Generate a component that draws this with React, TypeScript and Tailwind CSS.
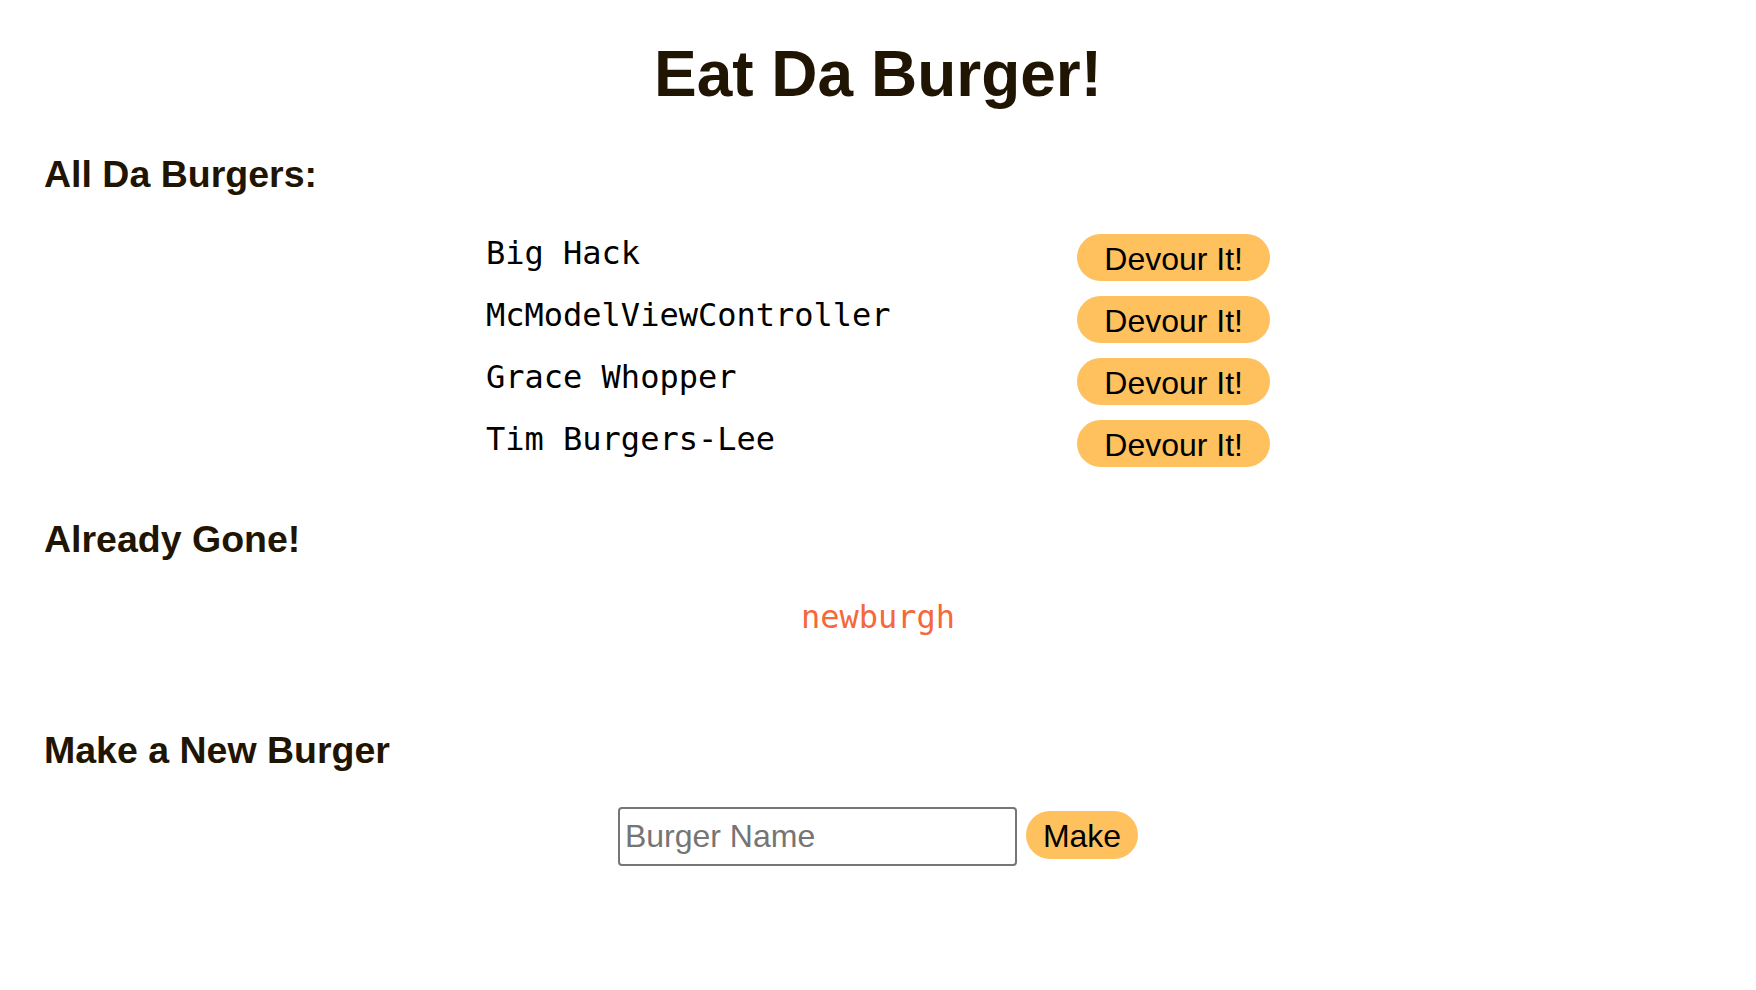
const burgers = ["Big Hack", "McModelViewController", "Grace Whopper", "Tim Burgers-Lee"];
const devoured = ["newburgh"];

export default function App() {
  return (
    <div className="min-h-screen bg-white px-[44px] pb-16 font-['Liberation_Sans',Arial,sans-serif] text-[#1f1502]">
      <h1 className="pt-[38px] text-center text-[64px] leading-[72px] font-bold">Eat Da Burger!</h1>

      <h3 className="mt-[43px] text-[37.5px] leading-[43px] font-bold">All Da Burgers:</h3>
      <ul className="mx-auto mt-[36px] w-[784px]">
        {burgers.map((b) => (
          <li key={b} className="flex h-[62px] items-start justify-between">
            <span className="mt-[3px] font-['DejaVu_Sans_Mono',monospace] text-[32px] leading-[37px] text-black">{b}</span>
            <button className="mt-[2px] h-[47px] rounded-full bg-[#ffc15e] px-[27px] pt-[2px] text-[32px] leading-none text-black">
              Devour It!
            </button>
          </li>
        ))}
      </ul>

      <h3 className="mt-[38px] text-[37.5px] leading-[43px] font-bold">Already Gone!</h3>
      <ul className="mt-[38px] text-center">
        {devoured.map((b) => (
          <li key={b} className="font-['DejaVu_Sans_Mono',monospace] text-[32px] leading-[37px] text-[#f4683b]">
            {b}
          </li>
        ))}
      </ul>

      <h3 className="mt-[93px] text-[37.5px] leading-[43px] font-bold">Make a New Burger</h3>
      <form className="mt-[35px] flex items-center justify-center gap-[9px]" onSubmit={(e) => e.preventDefault()}>
        <input
          type="text"
          placeholder="Burger Name"
          className="h-[59px] w-[399px] rounded-[4px] border-2 border-[#767676] pl-[5px] text-[32px] text-black placeholder:text-[#757575] outline-none"
        />
        <button type="submit" className="-mt-[3px] h-[48px] rounded-full bg-[#ffc15e] px-[17px] pt-[2px] text-[32px] leading-none text-black">
          Make
        </button>
      </form>
    </div>
  );
}
